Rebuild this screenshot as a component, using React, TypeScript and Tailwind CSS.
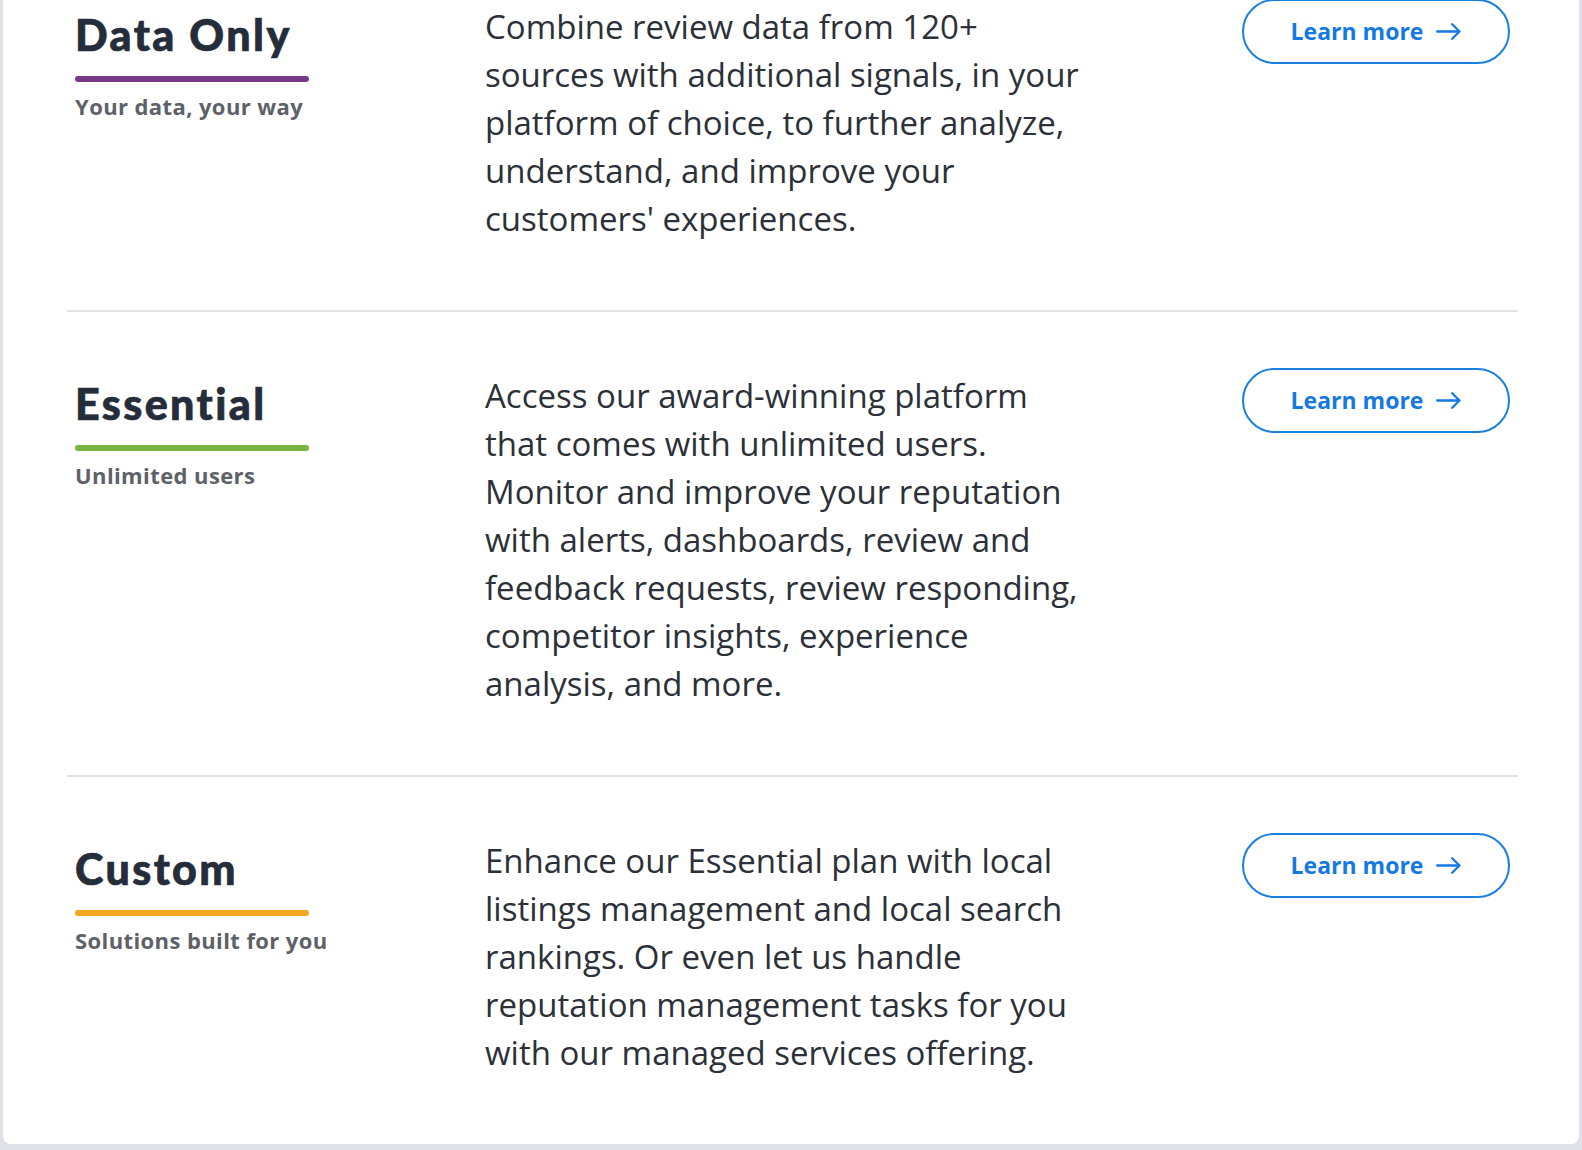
import React from "react";

type Plan = {
  title: string;
  subtitle: string;
  bar: string;
  lines: string[];
};

const plans: Plan[] = [
  {
    title: "Data Only",
    subtitle: "Your data, your way",
    bar: "bg-[#773a84]",
    lines: [
      "Combine review data from 120+",
      "sources with additional signals, in your",
      "platform of choice, to further analyze,",
      "understand, and improve your",
      "customers' experiences.",
    ],
  },
  {
    title: "Essential",
    subtitle: "Unlimited users",
    bar: "bg-[#7ab342]",
    lines: [
      "Access our award-winning platform",
      "that comes with unlimited users.",
      "Monitor and improve your reputation",
      "with alerts, dashboards, review and",
      "feedback requests, review responding,",
      "competitor insights, experience",
      "analysis, and more.",
    ],
  },
  {
    title: "Custom",
    subtitle: "Solutions built for you",
    bar: "bg-[#f4a623]",
    lines: [
      "Enhance our Essential plan with local",
      "listings management and local search",
      "rankings. Or even let us handle",
      "reputation management tasks for you",
      "with our managed services offering.",
    ],
  },
];

function Arrow() {
  return (
    <svg width="25" height="17" viewBox="0 0 25 17" fill="none" className="shrink-0">
      <path d="M1.2 8.5h22" stroke="currentColor" strokeWidth="2.3" strokeLinecap="round" />
      <path d="M16.2 1.3l7.2 7.2-7.2 7.2" stroke="currentColor" strokeWidth="2.3" strokeLinecap="round" strokeLinejoin="round" />
    </svg>
  );
}

function Row({ plan, last }: { plan: Plan; last: boolean }) {
  return (
    <div className={`flex items-start px-2 pt-[56px] pb-[67px] ${last ? "" : "border-b-2 border-[#e3e3e3]"}`}>
      <div className="w-[410px] shrink-0 mt-[14px]">
        <h2 className="font-['Lato',sans-serif] font-black text-[43px] leading-[43px] text-[#252d3a] tracking-[2.4px] [-webkit-text-stroke:0.7px_#252d3a]">
          {plan.title}
        </h2>
        <div className={`mt-[20px] h-[6px] w-[234px] rounded-full ${plan.bar}`} />
        <p className="mt-[10px] font-['Open_Sans',sans-serif] font-bold text-[22px] leading-[28px] tracking-[0.4px] text-[#5e6168]">
          {plan.subtitle}
        </p>
      </div>
      <div className="flex-1 mt-[4px] font-['Open_Sans',sans-serif] text-[33px] leading-[48px] text-[#2c3038]">
        {plan.lines.map((l, i) => (
          <span key={i} className="block whitespace-nowrap">
            {l}
          </span>
        ))}
      </div>
      <button className="shrink-0 w-[268px] h-[65px] rounded-full border-2 border-[#1b7fe2] flex items-center justify-center gap-[13px] text-[#1479e0] font-['Open_Sans',sans-serif] font-bold text-[23px] bg-white">
        <span>Learn more</span>
        <Arrow />
      </button>
    </div>
  );
}

export default function App() {
  return (
    <div className="min-h-[1150px] h-[1150px] bg-[#dfe3e7] px-[3px] pb-[6px] overflow-hidden">
      <div className="-mt-[57px] bg-white rounded-b-[8px] pl-[64px] pr-[61px]">
        {plans.map((p, i) => (
          <Row key={p.title} plan={p} last={i === plans.length - 1} />
        ))}
      </div>
    </div>
  );
}
